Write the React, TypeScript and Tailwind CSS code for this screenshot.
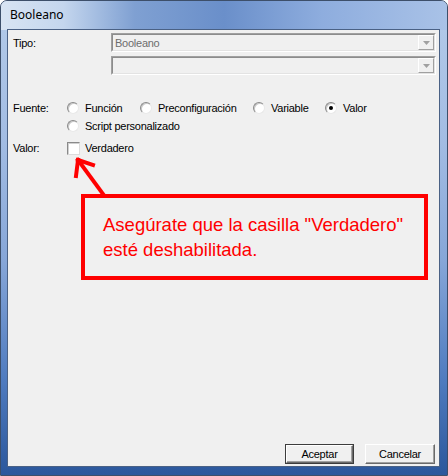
import React from "react";

const ui = { fontFamily: '"Liberation Sans", Arial, sans-serif' };

function Radio({ checked }: { checked?: boolean }) {
  return (
    <span className="relative inline-block w-[12px] h-[12px] shrink-0 rounded-full border border-t-[#8a8a8a] border-l-[#8a8a8a] border-b-[#e8e8e8] border-r-[#e8e8e8] bg-white shadow-[inset_1px_1px_0_#c8c8c8]">
      {checked && (
        <span className="absolute left-[3px] top-[3px] w-[4px] h-[4px] rounded-full bg-black" />
      )}
    </span>
  );
}

function Option({ label, checked, w }: { label: string; checked?: boolean; w?: string }) {
  return (
    <div className={`flex items-center ${w ?? ""}`}>
      <Radio checked={checked} />
      <span className="ml-[6px]">{label}</span>
    </div>
  );
}

function Combo({ text }: { text?: string }) {
  return (
    <div className="w-[325px] h-[19px] border border-t-[#a0a0a0] border-l-[#a0a0a0] border-b-white border-r-white">
      <div className="h-full flex items-center border border-t-[#8c8c8c] border-l-[#8c8c8c] border-b-[#e3e3e3] border-r-[#e3e3e3] bg-[#f0f0f0]">
        <span className="flex-1 pl-[2px] text-[#6d6d6d]">{text}</span>
        <div className="w-[16px] h-[15px] flex items-center justify-center border border-t-[#ffffff] border-l-[#ffffff] border-b-[#a0a0a0] border-r-[#a0a0a0] bg-[#f0f0f0]">
          <svg width="7" height="4" viewBox="0 0 7 4">
            <path d="M0 0 H7 L3.5 4 Z" fill="#a0a0a0" />
          </svg>
        </div>
      </div>
    </div>
  );
}

function Button({ label, def }: { label: string; def?: boolean }) {
  return (
    <div className={`h-[20px] ${def ? "w-[69px] border border-[#3c3c3c]" : "w-[70px]"}`}>
      <div className="h-full w-full border border-t-white border-l-white border-b-[#6a6a6a] border-r-[#6a6a6a] bg-[#f0f0f0] flex items-center justify-center shadow-[inset_-1px_-1px_0_#a0a0a0]">
        <span className="text-black">{label}</span>
      </div>
    </div>
  );
}

export default function App() {
  return (
    <div
      className="relative w-[448px] h-[476px] flex flex-col pt-[28px] pl-[6px] pr-[7px] pb-[8px] rounded-t-[7px] border border-[#3d4f6a] overflow-hidden bg-[linear-gradient(to_bottom,#b4cbe9_0%,#a2bce3_30%,#86a6d8_55%,#4f7bbf_80%,#2b579c_100%)]"
      style={ui}
    >
      <div className="absolute left-0 top-0 w-full h-[29px] bg-[linear-gradient(to_right,#d8e4f3_0%,#c4d6ee_14%,#7fa0d2_30%,#6a8fca_50%,#8eadde_72%,#a9c2e7_100%)]" />
      <div className="absolute left-[9px] top-[6px] text-[12px] text-black leading-[16px]" style={{ fontFamily: '"Noto Sans", "Liberation Sans", sans-serif' }}>
        Booleano
      </div>

      <div className="relative flex-1 flex flex-col border border-[#4a6185] bg-[#f0f0f0] text-[11px] tracking-[-0.25px] text-black leading-[14px]">
        <div className="flex items-center mt-[3px]">
          <span className="w-[103px] pl-[5px]">Tipo:</span>
          <Combo text="Booleano" />
        </div>
        <div className="flex items-center mt-[4px] pl-[103px]">
          <Combo />
        </div>

        <div className="flex items-center mt-[26px] h-[14px]">
          <span className="w-[59px] pl-[5px]">Fuente:</span>
          <Option label="Función" w="w-[73px]" />
          <Option label="Preconfiguración" w="w-[113px]" />
          <Option label="Variable" w="w-[72px]" />
          <Option label="Valor" checked />
        </div>
        <div className="flex items-center mt-[4px] h-[14px] pl-[59px]">
          <Option label="Script personalizado" />
        </div>
        <div className="flex items-center mt-[8px] h-[14px]">
          <span className="w-[59px] pl-[5px]">Valor:</span>
          <span className="w-[13px] h-[13px] border border-t-[#8a8a8a] border-l-[#8a8a8a] border-b-[#dcdcdc] border-r-[#dcdcdc] bg-white shadow-[inset_1px_1px_0_#d0d0d0]" />
          <span className="ml-[5px]">Verdadero</span>
        </div>

        <div className="mt-[39px] ml-[73px] w-[347px] h-[86px] border-[4px] border-[#ff0000] pl-[18px] pt-[14px] text-[#ff0000] text-[18.5px] leading-[25px] tracking-normal">
          <div>Asegúrate que la casilla "Verdadero"</div>
          <div>esté deshabilitada.</div>
        </div>

        <div className="mt-auto flex justify-end gap-[11px] pr-[4px] pb-[2px]">
          <Button label="Aceptar" def />
          <Button label="Cancelar" />
        </div>
      </div>

      <svg className="absolute left-0 top-0 pointer-events-none" width="448" height="476" viewBox="0 0 448 476">
        <g stroke="#ff0000" strokeWidth="4" strokeLinecap="square" fill="none">
          <line x1="77" y1="159" x2="102" y2="193" />
          <line x1="77" y1="159" x2="75" y2="175" />
          <line x1="77" y1="159" x2="92" y2="164" />
        </g>
      </svg>
    </div>
  );
}
